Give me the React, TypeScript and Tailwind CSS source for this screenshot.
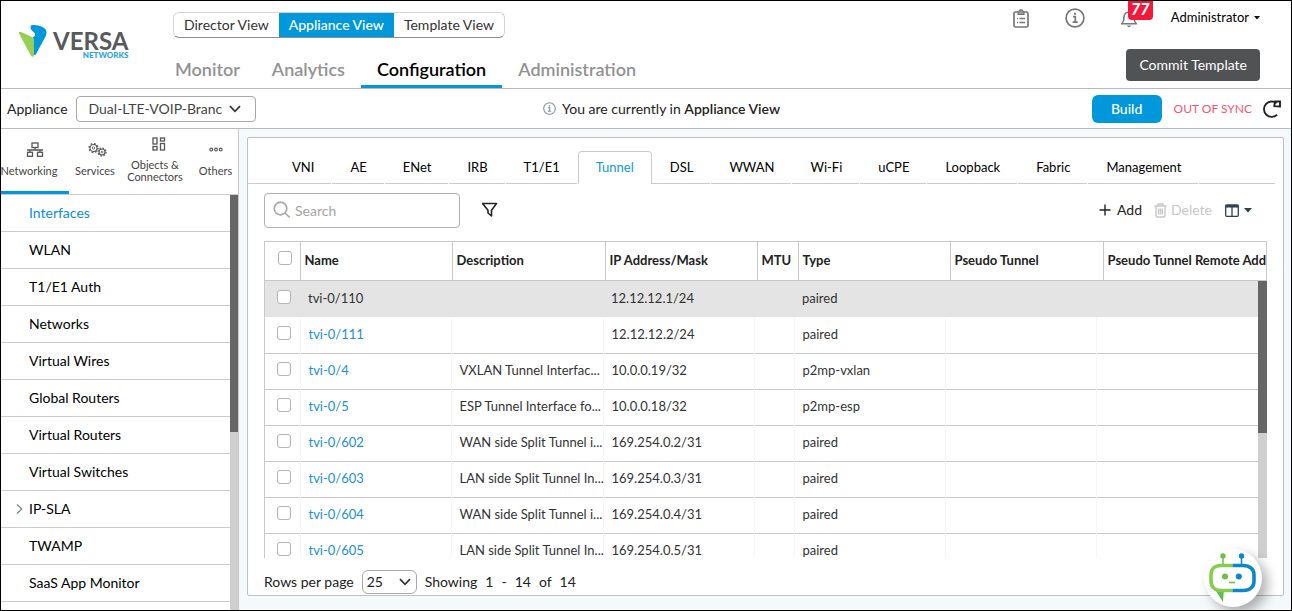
import React, { useState } from 'react';

type Row = { name: string; description: string; ip: string; type: string };

const rows: Row[] = [
  { name: 'tvi-0/110', description: '', ip: '12.12.12.1/24', type: 'paired' },
  { name: 'tvi-0/111', description: '', ip: '12.12.12.2/24', type: 'paired' },
  { name: 'tvi-0/4', description: 'VXLAN Tunnel Interfac...', ip: '10.0.0.19/32', type: 'p2mp-vxlan' },
  { name: 'tvi-0/5', description: 'ESP Tunnel Interface fo...', ip: '10.0.0.18/32', type: 'p2mp-esp' },
  { name: 'tvi-0/602', description: 'WAN side Split Tunnel i...', ip: '169.254.0.2/31', type: 'paired' },
  { name: 'tvi-0/603', description: 'LAN side Split Tunnel In...', ip: '169.254.0.3/31', type: 'paired' },
  { name: 'tvi-0/604', description: 'WAN side Split Tunnel i...', ip: '169.254.0.4/31', type: 'paired' },
  { name: 'tvi-0/605', description: 'LAN side Split Tunnel In...', ip: '169.254.0.5/31', type: 'paired' },
];

const menuItems = [
  'Interfaces',
  'WLAN',
  'T1/E1 Auth',
  'Networks',
  'Virtual Wires',
  'Global Routers',
  'Virtual Routers',
  'Virtual Switches',
  'IP-SLA',
  'TWAMP',
  'SaaS App Monitor',
];

const interfaceTabs = [
  'VNI', 'AE', 'ENet', 'IRB', 'T1/E1', 'Tunnel', 'DSL', 'WWAN', 'Wi-Fi', 'uCPE', 'Loopback', 'Fabric', 'Management',
];

const checkboxClass =
  'block size-3.5 appearance-none rounded-[3px] border border-[#b5b5b5] bg-white checked:bg-[#0098db]';

function Logo() {
  return (
    <a href="#home" aria-label="Versa Networks" className="flex items-start">
      <svg width="30" height="34" viewBox="0 0 30 34" aria-hidden="true">
        <path d="M1 9.5C0 8 2 7.600 3.500 8.300L13 12.500C15 13.500 16 15 16 17V31C16 33 13.800 33.500 12.800 31.500Z" fill="#97cf55" />
        <path d="M12.500 3C12.500 1.200 14 .7 16.500 1C21 1.300 26.500 3 28 6C28.800 8 28.600 10 27.800 12L17.800 30.500C17.200 31.700 16 31.600 16 30V17C16 15 15.500 14 14.500 13.200C18 12.500 17.500 9.500 15.500 8C13.500 6.500 12.500 5 12.500 3Z" fill="#0098db" />
      </svg>
      <span className="flex flex-col items-end pt-[7px]">
        <span className="pl-[5px] text-2xl leading-5 font-bold text-[#58595b]">VERSA</span>
        <span className="text-[8px] leading-2 font-black text-[#2ba3dc]">NETWORKS</span>
      </span>
    </a>
  );
}

function ChevronDown({ className = '' }: { className?: string }) {
  return (
    <svg className={className} width="12" height="8" viewBox="0 0 12 8" fill="none" stroke="#333" strokeWidth="1.7" aria-hidden="true">
      <path d="M1 1.200L6 6.300L11 1.200" />
    </svg>
  );
}

function InfoIcon({ size, color }: { size: number; color: string }) {
  return (
    <svg width={size} height={size} viewBox="0 0 20 20" fill="none" stroke={color} strokeWidth="1.700" aria-hidden="true">
      <circle cx="10" cy="10" r="8.900" />
      <path d="M8 8.700H10.300V14M7.600 14.200H12.700" />
      <path d="M9 5.700H10.900" strokeWidth="2" />
    </svg>
  );
}

function Header() {
  const views = ['Director View', 'Appliance View', 'Template View'];
  const sections = ['Monitor', 'Analytics', 'Configuration', 'Administration'];
  return (
    <header className="flex h-[88px] shrink-0 border-b border-[#b9b9b9] bg-white">
      <div className="w-[172px] shrink-0 pt-[23px] pl-[17px]">
        <Logo />
      </div>
      <div className="flex flex-1 flex-col items-start justify-between pt-[11px]">
        <div className="flex h-[26px] overflow-hidden rounded-md border border-[#d4d4d4] border-b-[#8f8f8f]">
          {views.map((v) => (
            <button
              key={v}
              type="button"
              className={
                v === 'Appliance View'
                  ? 'bg-[#0098db] px-2.5 text-sm font-medium text-white'
                  : 'px-2.5 text-sm text-[#333]'
              }
            >
              {v}
            </button>
          ))}
        </div>
        <nav aria-label="Main" className="flex">
          {sections.map((s) => (
            <a
              key={s}
              href={'#' + s}
              className={
                s === 'Configuration'
                  ? 'h-[31px] border-b-3 border-[#0098db] px-4 text-lg leading-6 font-semibold text-black'
                  : 'h-[31px] px-4 text-lg leading-6 font-semibold text-[#929292] first:pl-0.5'
              }
            >
              {s}
            </a>
          ))}
        </nav>
      </div>
      <div className="flex shrink-0 flex-col items-end justify-between pr-[31px] pb-[7px]">
        <div className="flex h-[34px] items-center">
          <button type="button" aria-label="Tasks" className="mr-9">
            <svg width="16" height="19" viewBox="0 0 16 19" fill="none" stroke="#777" strokeWidth="1.700" aria-hidden="true">
              <rect x="1" y="3" width="14" height="15" rx="1.500" />
              <path d="M5 5.500V3C5 3 6 3 6.300 1.800C6.800 .6 9.200 .6 9.700 1.800C10 3 11 3 11 3V5.500Z" fill="#999" strokeWidth="1.200" />
              <path d="M4 9.500H5.200M6.500 9.500H12M4 13.500H5.200M6.500 13.500H12" strokeWidth="1.300" />
            </svg>
          </button>
          <button type="button" aria-label="Information" className="mr-9">
            <InfoIcon size={20} color="#777" />
          </button>
          <button type="button" aria-label="Notifications" className="relative mr-[34px]">
            <svg width="16" height="19" viewBox="0 0 16 19" fill="none" stroke="#777" strokeWidth="1.600" aria-hidden="true">
              <path d="M.8 14.700H15.200C13.500 13 13 11.500 13 8.500C13 5 11 3 8 3C5 3 3 5 3 8.500C3 11.500 2.500 13 .8 14.700Z" />
              <path d="M8 3V1" />
              <path d="M5.500 16.500H10.500L8 18.500Z" fill="#777" stroke="none" />
            </svg>
            <span className="absolute -top-2 left-[7px] flex h-[19px] w-[25px] items-center justify-center rounded-b-sm bg-[#f5183b] pb-0.5 text-base font-black text-white italic">
              77
            </span>
          </button>
          <button type="button" className="flex items-center gap-[5px] text-[13px] text-black">
            Administrator
            <svg width="6" height="4" viewBox="0 0 6 4" aria-hidden="true">
              <path d="M0 0H6L3 3.500Z" fill="#111" />
            </svg>
          </button>
        </div>
        <button type="button" className="h-8 rounded-sm bg-[#515254] px-[13px] text-sm text-white">
          Commit Template
        </button>
      </div>
    </header>
  );
}

function ContextBar() {
  return (
    <div className="flex h-10 shrink-0 items-center border-b border-[#b9b9b9] bg-white pr-[9px] pl-1.5">
      <label htmlFor="appliance" className="mr-2 text-sm text-[#222]">Appliance</label>
      <div className="relative">
        <select
          id="appliance"
          className="h-[26px] w-[180px] appearance-none rounded-sm border border-[#a9a9a9] bg-white pr-7 pl-3 text-sm text-[#444]"
        >
          <option>Dual-LTE-VOIP-Branc</option>
        </select>
        <ChevronDown className="pointer-events-none absolute top-[9px] right-[15px]" />
      </div>
      <p className="flex flex-1 items-center justify-center pr-6 text-sm text-[#222]">
        <span className="mr-1.5"><InfoIcon size={13} color="#7f97a6" /></span>
        You are currently in&nbsp;<span className="font-semibold">Appliance View</span>
      </p>
      <button type="button" className="mr-3 h-7 w-[70px] rounded-md bg-[#0098db] text-sm font-medium text-white">
        Build
      </button>
      <span className="mr-2.5 text-xs text-[#f9566f]">OUT OF SYNC</span>
      <button type="button" aria-label="Refresh">
        <svg width="20" height="20" viewBox="0 0 20 20" fill="none" stroke="#222" strokeWidth="1.900" aria-hidden="true">
          <path d="M14.500 4.200A7.700 7.700 0 1 0 15 15.800" />
          <path d="M12.300 7.200L13 2.500H18V7.500Z" />
        </svg>
      </button>
    </div>
  );
}

function NetworkIcon() {
  return (
    <svg width="18" height="16" viewBox="0 0 18 16" fill="none" stroke="#555" strokeWidth="1.300" aria-hidden="true">
      <rect x="6" y="1" width="6" height="4.500" />
      <path d="M9 5.500V8M1 8H17M4 8V10M14 8V10" />
      <rect x="1.500" y="10.300" width="5" height="4" />
      <rect x="11.500" y="10.300" width="5" height="4" />
    </svg>
  );
}

function GearsIcon() {
  return (
    <svg width="19" height="16" viewBox="0 0 19 16" fill="none" stroke="#555" aria-hidden="true">
      <circle cx="5.500" cy="6" r="3.500" strokeWidth="1.100" />
      <circle cx="5.500" cy="6" r="1.200" strokeWidth=".8" />
      <circle cx="5.500" cy="6" r="4.500" strokeWidth="1.300" strokeDasharray="1.700 1.834" />
      <circle cx="14" cy="10" r="3" strokeWidth="1.100" />
      <circle cx="14" cy="10" r="1" strokeWidth=".8" />
      <circle cx="14" cy="10" r="4" strokeWidth="1.300" strokeDasharray="1.500 1.642" />
    </svg>
  );
}

function ObjectsIcon() {
  return (
    <svg width="14" height="14" viewBox="0 0 14 14" fill="none" stroke="#555" strokeWidth="1.300" aria-hidden="true">
      <rect x="1" y="1" width="4" height="6" />
      <rect x="8.500" y="1" width="4" height="3" />
      <rect x="1" y="9.500" width="4" height="3.500" />
      <rect x="8.500" y="6.500" width="4" height="6.500" />
    </svg>
  );
}

function DotsIcon() {
  return (
    <svg width="14" height="5" viewBox="0 0 14 5" fill="none" stroke="#555" strokeWidth="1.100" aria-hidden="true">
      <circle cx="2.300" cy="2.500" r="1.400" />
      <circle cx="7" cy="2.500" r="1.400" />
      <circle cx="11.700" cy="2.500" r="1.400" />
    </svg>
  );
}

function Sidebar() {
  const cell = 'flex flex-col items-center text-[11px] text-[#444]';
  return (
    <aside className="flex w-[238px] shrink-0 flex-col border-r border-[#c8c8c8] bg-white">
      <nav aria-label="Categories" className="grid h-[66px] shrink-0 grid-cols-[68px_52px_68px_1fr] overflow-hidden border-b border-[#ccc]">
        <a href="#networking" className={cell + ' gap-[7px] border-b-3 border-[#0098db] pt-[13px]'}>
          <NetworkIcon />
          <span className="-ml-3 leading-3">Networking</span>
        </a>
        <a href="#services" className={cell + ' gap-[7px] pt-[13px]'}>
          <span className="pl-1"><GearsIcon /></span>
          <span className="leading-3">Services</span>
        </a>
        <a href="#objects" className={cell + ' gap-2 pt-2'}>
          <span className="pl-2"><ObjectsIcon /></span>
          <span className="text-center leading-3">Objects &amp; Connectors</span>
        </a>
        <a href="#others" className={cell + ' gap-[13px] pt-[18px] pl-1'}>
          <DotsIcon />
          <span className="leading-3">Others</span>
        </a>
      </nav>
      <div className="flex min-h-0 flex-1">
        <ul className="flex-1 overflow-hidden">
          {menuItems.map((m) => (
            <li key={m} className="border-b border-[#ccc]">
              <a
                href={'#' + m}
                className={
                  m === 'Interfaces'
                    ? 'flex h-9 items-center text-sm text-[#0d8fd3]'
                    : 'flex h-9 items-center text-sm text-black'
                }
              >
                <span className="flex w-7 justify-end pr-1.5">
                  {m === 'IP-SLA' && (
                    <svg width="7" height="12" viewBox="0 0 7 12" fill="none" stroke="#6c8596" strokeWidth="1.200" aria-hidden="true">
                      <path d="M1 1.500L5.800 6L1 10.500" />
                    </svg>
                  )}
                </span>
                {m}
              </a>
            </li>
          ))}
        </ul>
        <div className="w-2 bg-[#d0cfcf]">
          <div className="h-[57%] bg-[#666]" />
        </div>
      </div>
    </aside>
  );
}

function Toolbar() {
  return (
    <div className="flex h-[57px] shrink-0 items-start pt-[9px] pr-[15px]">
      <div className="relative">
        <svg className="absolute top-2 left-[9px]" width="18" height="18" viewBox="0 0 18 18" fill="none" stroke="#aaa" strokeWidth="1.700" aria-hidden="true">
          <circle cx="7.500" cy="7.500" r="6.300" />
          <path d="M12 12L16.800 16.500" />
        </svg>
        <input
          type="text"
          aria-label="Search"
          placeholder="Search"
          className="h-[35px] w-[196px] rounded-sm border border-[#b0b0b0] bg-white pl-[30px] text-sm placeholder:text-[#a6a6a6]"
        />
      </div>
      <button type="button" aria-label="Filter" className="mt-[9px] ml-[21px]">
        <svg width="17" height="16" viewBox="0 0 17 16" fill="none" stroke="#222" strokeWidth="1.600" aria-hidden="true">
          <path d="M1.500 1.500H15.500L10.500 8.300V14L7 11V8.300Z" strokeLinejoin="round" />
        </svg>
      </button>
      <div className="mt-2 ml-auto flex h-[18px] items-center text-sm">
        <button type="button" className="mr-3 flex items-center gap-1.5 text-[#222]">
          <svg width="12" height="12" viewBox="0 0 12 12" stroke="#222" strokeWidth="1.400" aria-hidden="true">
            <path d="M6 .5V11.500M.5 6H11.500" />
          </svg>
          Add
        </button>
        <button type="button" disabled className="mr-[13px] flex items-center gap-1 text-[#c8c8c8]">
          <svg width="13" height="15" viewBox="0 0 13 15" fill="none" stroke="#c8c8c8" strokeWidth="1.400" aria-hidden="true">
            <path d="M.5 3H12.500M4 3V1H9V3M2 3V12.500C2 13.500 2.500 14 3.500 14H9.500C10.500 14 11 13.500 11 12.500V3M4.600 5.500V11.500M6.500 5.500V11.500M8.400 5.500V11.500" />
          </svg>
          Delete
        </button>
        <button type="button" aria-label="Columns" className="flex items-center gap-[5px]">
          <svg width="14" height="13" viewBox="0 0 14 13" fill="none" stroke="#2f4050" strokeWidth="1.300" aria-hidden="true">
            <rect x=".7" y=".9" width="12.600" height="11.400" rx="1" />
            <path d="M.7 2.300H13.300" strokeWidth="2.500" />
            <path d="M7 3V12" />
          </svg>
          <svg width="8" height="5" viewBox="0 0 8 5" aria-hidden="true">
            <path d="M0 0H8L4 4.500Z" fill="#2f4050" />
          </svg>
        </button>
      </div>
    </div>
  );
}

function TunnelTable() {
  const [checked, setChecked] = useState<Record<string, boolean>>({});
  const columns = ['Name', 'Description', 'IP Address/Mask', 'MTU', 'Type', 'Pseudo Tunnel', 'Pseudo Tunnel Remote Address'];
  return (
    <div className="flex min-h-0 flex-1 flex-col">
      <div className="shrink-0 border border-[#c8c8c8]">
        <table className="w-full table-fixed border-collapse">
          <colgroup>
            <col className="w-[35px]" />
            <col className="w-[152px]" />
            <col className="w-[153px]" />
            <col className="w-[152px]" />
            <col className="w-[41px]" />
            <col className="w-[152px]" />
            <col className="w-[153px]" />
            <col />
          </colgroup>
          <thead>
            <tr className="h-[38px]">
              <th className="border-r border-[#c8c8c8] pb-1.5 pl-[13px]">
                <input type="checkbox" aria-label="Select all" className={checkboxClass} />
              </th>
              {columns.map((c) => (
                <th
                  key={c}
                  scope="col"
                  className="overflow-hidden border-r border-[#c8c8c8] pl-1 text-left text-[13px] font-bold whitespace-nowrap text-[#222] last:border-r-0"
                >
                  {c}
                </th>
              ))}
            </tr>
          </thead>
        </table>
      </div>
      <div className="flex min-h-0 flex-1 border-l border-[#c8c8c8]">
        <div className="flex-1 overflow-hidden">
          <table aria-label="Tunnel interfaces" className="w-full table-fixed border-collapse text-[13px] text-[#333]">
            <colgroup>
              <col className="w-[35px]" />
              <col className="w-[151px]" />
              <col className="w-[152px]" />
              <col className="w-[151px]" />
              <col className="w-10" />
              <col className="w-[151px]" />
              <col className="w-[151px]" />
              <col />
            </colgroup>
            <tbody>
              {rows.map((r, i) => (
                <tr
                  key={r.name}
                  className={
                    i === 0
                      ? 'h-9 bg-[#e4e4e4]'
                      : 'h-9 border-b border-[#c8c8c8] *:border-r *:border-r-[#f6f6f6] *:last:border-r-0'
                  }
                >
                  <td className="pb-1 pl-3">
                    <input
                      type="checkbox"
                      aria-label={'Select ' + r.name}
                      checked={!!checked[r.name]}
                      onChange={(e) => setChecked({ ...checked, [r.name]: e.target.checked })}
                      className={checkboxClass}
                    />
                  </td>
                  <td className="pl-2">
                    <a href={'#' + r.name} className={i === 0 ? 'text-[#333]' : 'text-[#1a8fd1]'}>{r.name}</a>
                  </td>
                  <td className="pl-2 whitespace-nowrap">{r.description}</td>
                  <td className="pl-2">{r.ip}</td>
                  <td />
                  <td className="pl-2">{r.type}</td>
                  <td />
                  <td />
                </tr>
              ))}
            </tbody>
          </table>
        </div>
        <div className="w-[9px] shrink-0 bg-[#d0cfcf]">
          <div className="h-[55%] bg-[#666]" />
        </div>
      </div>
    </div>
  );
}

function Pager() {
  return (
    <div className="flex h-[37px] shrink-0 items-start pt-3 text-sm leading-6 text-[#222]">
      <label htmlFor="page-size" className="mr-2">Rows per page</label>
      <div className="relative mr-2">
        <select
          id="page-size"
          defaultValue="25"
          className="block h-6 w-[55px] appearance-none rounded-md border border-[#a9a9a9] bg-white pl-1 text-sm text-[#222]"
        >
          <option>25</option>
          <option>50</option>
        </select>
        <ChevronDown className="pointer-events-none absolute top-2 right-1.5" />
      </div>
      <p className="flex gap-2">
        <span>Showing</span>
        <span>1</span>
        <span>-</span>
        <span>14</span>
        <span>of</span>
        <span>14</span>
      </p>
    </div>
  );
}

function ChatBot() {
  return (
    <button
      type="button"
      aria-label="Open assistant"
      className="absolute right-[29px] bottom-[3px] flex size-[58px] items-center justify-center rounded-full bg-white shadow-[6px_6px_12px_rgba(0,0,0,0.3)]"
    >
      <svg width="48" height="50" viewBox="1 1 48 50" fill="none" aria-hidden="true">
        <path d="M6 36L15 50L15.800 39Z" fill="#5fbf4a" />
        <path d="M24.500 13.500H13C6.500 13.500 3 17.500 3 22.500V29C3 35 7 38.500 13 38.500H24.500" stroke="#85cd4e" strokeWidth="3.600" />
        <path d="M24.500 13.500H35C42 13.500 46 17.500 46 22.500V29C46 35 42 38.500 35 38.500H24.500" stroke="#0c87cb" strokeWidth="3.600" />
        <path d="M15 4V12" stroke="#6cc04a" strokeWidth="1.500" />
        <path d="M33.500 4V12" stroke="#0c87cb" strokeWidth="1.500" />
        <circle cx="15" cy="4" r="2.700" fill="#6cc04a" />
        <circle cx="33.500" cy="4" r="2.700" fill="#0c87cb" />
        <circle cx="17" cy="24.500" r="3" fill="#6cc04a" />
        <circle cx="30.800" cy="24.500" r="3" fill="#0c87cb" />
        <path d="M21 30.500H27" stroke="#6cc04a" strokeWidth="1.600" />
      </svg>
    </button>
  );
}

export default function App() {
  return (
    <div className="relative flex h-screen flex-col overflow-hidden border border-black bg-white font-['Lato',sans-serif]">
      <Header />
      <ContextBar />
      <div className="flex min-h-0 flex-1">
        <Sidebar />
        <main className="flex min-w-0 flex-1 bg-[#f4f9fc] pt-2 pr-[7px] pb-3.5 pl-2">
          <section className="flex min-w-0 flex-1 flex-col rounded-xs border border-[#c0c0c0] bg-white">
            <nav aria-label="Interface types" className="mr-2 flex h-[46px] shrink-0 items-end">
              <span className="w-[26px] border-b border-[#ccc]" />
              {interfaceTabs.map((t) => (
                <a
                  key={t}
                  href={'#' + t}
                  className={
                    t === 'Tunnel'
                      ? 'flex h-[33px] items-center rounded-t-sm border border-b-0 border-[#ccc] px-[17px] text-[13px] text-[#0d9ade]'
                      : 'mr-px flex h-[33px] items-center border-t border-b border-t-transparent border-b-[#ccc] pt-px pr-[17px] pl-[18px] text-[13px] text-black'
                  }
                >
                  {t}
                </a>
              ))}
              <span className="flex-1 border-b border-[#ccc]" />
            </nav>
            <div className="flex min-h-0 flex-1 flex-col pr-4 pl-4">
              <Toolbar />
              <TunnelTable />
              <Pager />
            </div>
          </section>
        </main>
      </div>
      <ChatBot />
    </div>
  );
}
